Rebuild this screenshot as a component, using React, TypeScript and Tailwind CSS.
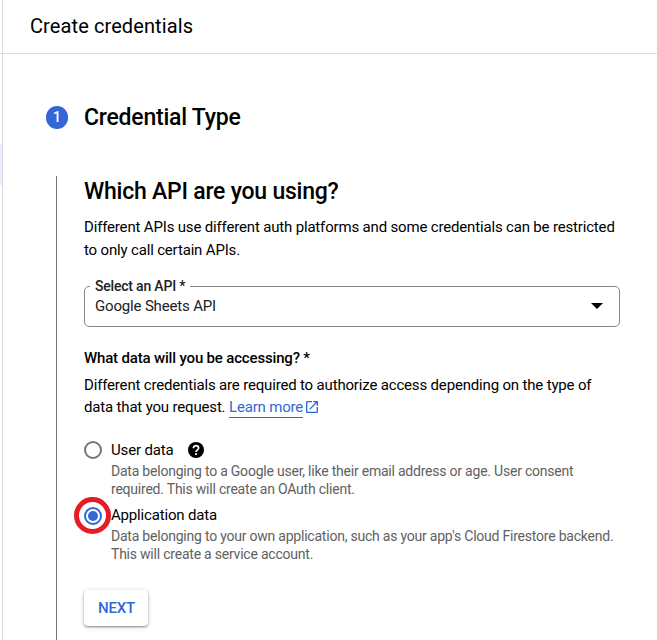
import React from "react";

function RadioMark({ checked }: { checked?: boolean }) {
  return (
    <span
      className={
        checked
          ? "flex h-[18px] w-[18px] items-center justify-center rounded-full border-2 border-[#3367d6]"
          : "flex h-[18px] w-[18px] items-center justify-center rounded-full border-2 border-[#757575]"
      }
    >
      {checked && <span className="h-[9.4px] w-[9.4px] rounded-full bg-[#3367d6]" />}
    </span>
  );
}

function HelpIcon() {
  return (
    <svg viewBox="0 0 16 16" className="h-4 w-4" fill="none">
      <circle cx="8" cy="8" r="8" fill="#000" />
      <path d="M5.4 6.2c0-1.5 1.1-2.5 2.6-2.5s2.6 1 2.6 2.4c0 1.7-2.5 1.9-2.5 3.8" stroke="#fff" strokeWidth="1.7" />
      <path d="M7.1 11.2h1.9v1.8H7.1z" fill="#fff" />
    </svg>
  );
}

function ExternalIcon() {
  return (
    <svg viewBox="3 3 18 18" className="h-3 w-3" fill="#3367d6">
      <path d="M19 19H5V5h7V3H5c-1.11 0-2 .9-2 2v14c0 1.1.89 2 2 2h14c1.1 0 2-.9 2-2v-7h-2v7zM14 3v2h3.59l-9.83 9.83 1.41 1.41L19 6.41V10h2V3h-7z" />
    </svg>
  );
}

export default function App() {
  return (
    <div className="flex h-[640px] w-[657px] overflow-hidden bg-white font-['Roboto',sans-serif] text-[15px] tracking-[-0.17px] text-black">
      <aside className="w-[3px] shrink-0 border-r border-[#dadce0]">
        <div className="h-[54px] border-b border-[#dadce0]" />
        <div className="mt-[90px] h-[41px] bg-[#e8f0fe]" />
      </aside>
      <main className="flex min-w-0 flex-1 flex-col whitespace-nowrap">
        <header className="flex h-[54px] shrink-0 items-start border-b border-[#dadce0] pl-[27px] pt-[14px]">
          <h1 className="text-[20px] leading-6 tracking-[0.1px]">Create credentials</h1>
        </header>
        <div className="mt-[49px] flex h-[30px] shrink-0 items-center pl-[43px]">
          <span className="mb-px flex h-[23px] w-[22px] items-center justify-center rounded-full bg-[#3367d6] pb-px text-[14px] font-medium text-white">
            1
          </span>
          <h2 className="ml-4 text-[23px] font-medium leading-[30px] tracking-[-0.23px]">Credential Type</h2>
        </div>
        <section className="ml-[53px] mt-[43px] flex h-[464px] flex-col border-l border-[#757575] pl-[27px]">
          <h2 className="mt-px text-[23px] font-medium leading-[30px] tracking-[-0.23px]">Which API are you using?</h2>
          <p className="mt-[9px] leading-[23px]">
            Different APIs use different auth platforms and some credentials can be restricted
            <br />
            to only call certain APIs.
          </p>
          <fieldset className="mt-[15px] h-[50px] w-[536px] rounded-[5px] border border-[#80868b] pl-[5px] pr-[16px]">
            <legend className="h-[18px] px-[5px] text-[14px] font-medium leading-[18px] tracking-[-0.2px] text-[#202124]">
              Select an API *
            </legend>
            <div className="flex h-[21px] items-center justify-between pl-[5px]">
              <span className="pt-[2px] text-[#202124]">Google Sheets API</span>
              <svg viewBox="0 0 12 6" className="h-[6px] w-[12px]">
                <path d="M0 0h12L6 6z" />
              </svg>
            </div>
          </fieldset>
          <h3 className="mt-[20px] font-medium leading-[22px]">What data will you be accessing? *</h3>
          <p className="mt-[5px] leading-[22px]">
            Different credentials are required to authorize access depending on the type of
          </p>
          <p className="flex items-center leading-[22px]">
            data that you request.&nbsp;
            <a className="flex items-center text-[#3367d6]">
              <span className="h-[21px] border-b border-[#3367d6] leading-[20px]">Learn more</span>
              <span className="ml-[3px]"><ExternalIcon /></span>
            </a>
          </p>
          <div className="mt-[21px] flex">
            <span className="mt-[2px]"><RadioMark /></span>
            <div className="ml-[9px]">
              <div className="flex h-[22px] items-center">
                User data
                <span className="ml-[15px]"><HelpIcon /></span>
              </div>
              <p className="mt-px text-[14px] leading-[18px] tracking-[-0.22px] text-[#616161]">
                Data belonging to a Google user, like their email address or age. User consent
                <br />
                required. This will create an OAuth client.
              </p>
            </div>
          </div>
          <div className="mt-[6px] flex">
            <span className="relative mt-[3px] h-[18px]">
              <RadioMark checked />
              <span className="absolute -left-[10px] -top-[10px] h-[37px] w-[37px] rounded-full border-[5px] border-[#e51c23]" />
            </span>
            <div className="relative ml-[9px]">
              <div className="h-[22px] leading-[22px]">Application data</div>
              <p className="mt-px text-[14px] leading-[18px] tracking-[-0.22px] text-[#616161]">
                Data belonging to your own application, such as your app's Cloud Firestore backend.
                <br />
                This will create a service account.
              </p>
            </div>
          </div>
          <button className="mt-[27px] h-[36px] w-[64px] shrink-0 rounded-[4px] bg-white pl-px pt-px text-[15px] font-medium tracking-[-0.15px] text-[#3367d6] shadow-[0_1px_2px_rgba(0,0,0,0.4),0_1px_5px_rgba(0,0,0,0.15)]">
            NEXT
          </button>
        </section>
      </main>
    </div>
  );
}
